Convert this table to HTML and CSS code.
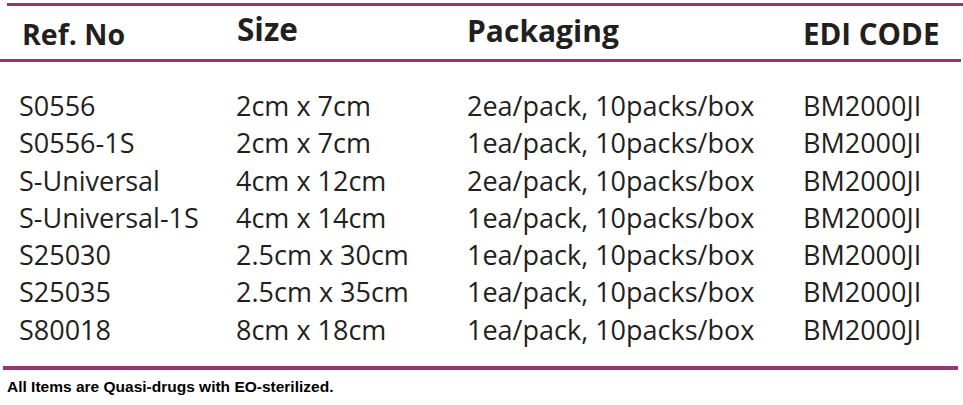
FILE: index.html
```html
<!DOCTYPE html>
<html>
<head>
<meta charset="utf-8">
<link rel="stylesheet" href="styles.css">
</head>
<body>
<div class="sheet">
  <div class="rule rule-top"></div>
  <div class="head">
    <div class="h h-ref">Ref. No</div>
    <div class="h h-size">Size</div>
    <div class="h h-pack">Packaging</div>
    <div class="h h-edi">EDI CODE</div>
  </div>
  <div class="rule rule-mid"></div>
  <div class="body">
    <div class="row"><span>S0556</span><span>2cm x 7cm</span><span>2ea/pack, 10packs/box</span><span>BM2000JI</span></div>
    <div class="row"><span>S0556-1S</span><span>2cm x 7cm</span><span>1ea/pack, 10packs/box</span><span>BM2000JI</span></div>
    <div class="row"><span>S-Universal</span><span>4cm x 12cm</span><span>2ea/pack, 10packs/box</span><span>BM2000JI</span></div>
    <div class="row"><span>S-Universal-1S</span><span>4cm x 14cm</span><span>1ea/pack, 10packs/box</span><span>BM2000JI</span></div>
    <div class="row"><span>S25030</span><span>2.5cm x 30cm</span><span>1ea/pack, 10packs/box</span><span>BM2000JI</span></div>
    <div class="row"><span>S25035</span><span>2.5cm x 35cm</span><span>1ea/pack, 10packs/box</span><span>BM2000JI</span></div>
    <div class="row"><span>S80018</span><span>8cm x 18cm</span><span>1ea/pack, 10packs/box</span><span>BM2000JI</span></div>
  </div>
  <div class="rule rule-bottom"></div>
  <div class="note">All Items are Quasi-drugs with EO-sterilized.</div>
</div>
</body>
</html>
```

FILE: styles.css
```css
html, body {
  margin: 0;
  padding: 0;
  background: #ffffff;
}
.sheet {
  width: 963px;
  height: 405px;
  overflow: hidden;
  color: #231f20;
  font-family: "Open Sans", "Noto Sans", sans-serif;
}
.rule {
  background: #9a3574;
}
.rule-top {
  height: 3px;
  margin: 3px 0 0 7px;
}
.head {
  display: grid;
  grid-template-columns: 215px 230px 336px 1fr;
  padding-left: 22px;
  height: 53px;
  font-weight: 700;
}
.h { line-height: 30px; }
.h-ref { padding-top: 13px; font-size: 28.5px; }
.h-size { padding-top: 8px; font-size: 31.5px; }
.h-pack { padding-top: 10px; font-size: 30px; }
.h-edi { padding-top: 13px; font-size: 29.5px; }
.rule-mid {
  height: 3px;
  margin-right: 2px;
}
.body {
  padding: 25px 0 18px 19px;
}
.row {
  display: grid;
  grid-template-columns: 217px 231px 336px 1fr;
  height: 37.3px;
  line-height: 37.3px;
  font-size: 27px;
}
.rule-bottom {
  height: 4px;
  margin: 0 5px 0 3px;
}
.note {
  padding: 9px 0 0 7px;
  font-family: "Liberation Sans", Arial, sans-serif;
  font-weight: 700;
  font-size: 15.5px;
  line-height: 16px;
  color: #000;
}
```
